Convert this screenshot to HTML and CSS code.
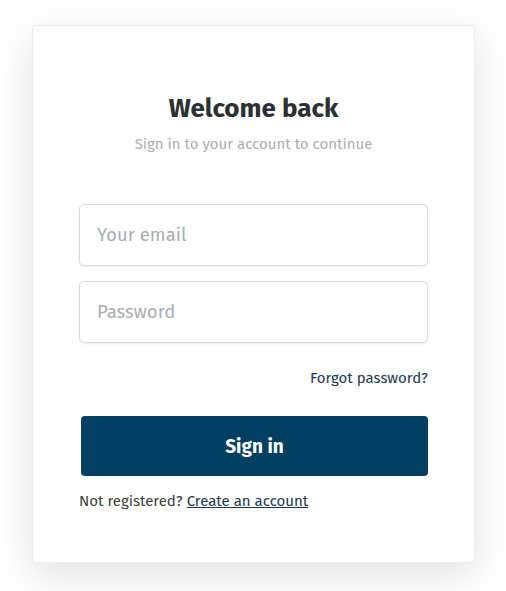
FILE: index.html
```html
<!DOCTYPE html>
<html lang="en">
<head>
<meta charset="utf-8">
<title>Sign in</title>
<link rel="stylesheet" href="styles.css">
</head>
<body>
<main class="page">
  <form class="card">
    <h1 class="title">Welcome back</h1>
    <p class="subtitle">Sign in to your account to continue</p>
    <div class="fields">
      <input class="input" type="email" placeholder="Your email">
      <input class="input" type="password" placeholder="Password">
    </div>
    <div class="forgot-row"><a class="forgot" href="#">Forgot password?</a></div>
    <button class="btn" type="button">Sign in</button>
    <p class="register">Not registered? <a href="#" class="create">Create an account</a></p>
  </form>
</main>
</body>
</html>
```
FILE: styles.css
```css
html, body {
  margin: 0;
  padding: 0;
  background: #ffffff;
}
body {
  font-family: "Fira Sans", "Noto Sans", "Open Sans", sans-serif;
  color: #2d3236;
}
.page {
  padding: 25px 31px 28px 32px;
}
.card {
  box-sizing: border-box;
  width: 443px;
  height: 538px;
  background: #fff;
  border: 1px solid #ececec;
  border-radius: 3px;
  box-shadow: 0 12px 40px rgba(0, 0, 0, 0.12);
  padding: 66px 46px 0 46px;
  display: flex;
  flex-direction: column;
}
.title {
  margin: 0;
  text-align: center;
  font-size: 26px;
  font-weight: 700;
  line-height: 34px;
  color: #2b3033;
}
.subtitle {
  margin: 8px 0 0;
  text-align: center;
  font-size: 15px;
  line-height: 20px;
  color: #a9aeb3;
}
.fields {
  margin-top: 50px;
  display: flex;
  flex-direction: column;
  gap: 15px;
}
.input {
  box-sizing: border-box;
  height: 62px;
  width: 100%;
  border: 1px solid #dcdcdc;
  border-radius: 5px;
  box-shadow: 0 1px 2px rgba(0, 0, 0, 0.08);
  padding: 0 17px;
  font-family: inherit;
  font-size: 18.5px;
  color: #2d3236;
  background: #fff;
  outline: none;
}
.input::placeholder {
  color: #a8aeb2;
}
.forgot-row {
  margin-top: 25px;
  display: flex;
  justify-content: flex-end;
}
.forgot {
  font-size: 15px;
  line-height: 20px;
  color: #1b3a4d;
  text-decoration: none;
}
.btn {
  margin: 28px 0 0 2px;
  height: 60px;
  border: none;
  border-radius: 4px;
  background: #023f61;
  color: #fff;
  font-family: inherit;
  font-size: 19px;
  font-weight: 700;
  cursor: pointer;
}
.register {
  margin: 15px 0 0;
  font-size: 15px;
  line-height: 20px;
  color: #3a3f44;
}
.create {
  color: #1b3a4d;
}
```
